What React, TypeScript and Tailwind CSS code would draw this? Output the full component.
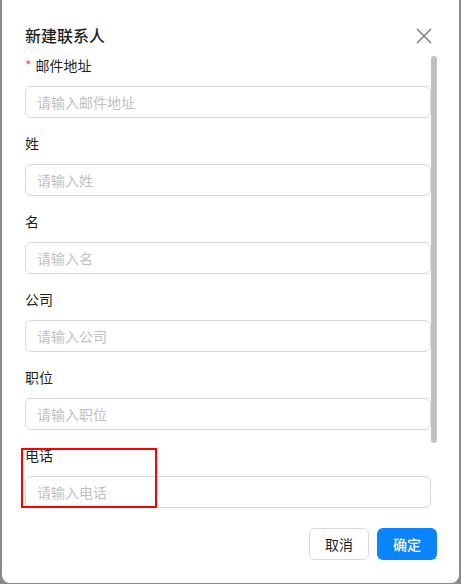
const fields = [
  { label: '邮件地址', required: true },
  { label: '姓' },
  { label: '名' },
  { label: '公司' },
  { label: '职位' },
  { label: '电话' },
];

export default function App() {
  return (
    <div
      className="relative h-[584px] w-[461px] overflow-hidden bg-[#8a8a8a] pt-px"
      style={{ fontFamily: '"Noto Sans CJK SC", "Noto Sans", sans-serif' }}
    >
      {/* dialog */}
      <div className="mx-[2px] -mt-[11px] h-[593px] rounded-lg bg-white pl-[23px] pr-[22px] pt-[34px]">
        <div className="flex h-6 items-center justify-between">
          <h2 className="pb-[3px] text-base font-medium leading-6 text-[#1f1f1f]">新建联系人</h2>
          <svg width="16" height="16" viewBox="0 0 16 16" className="mr-[5px]">
            <path d="M1 1L15 15M15 1L1 15" stroke="#737373" strokeWidth="1.3" fill="none" />
          </svg>
        </div>

        <div className="mt-2 flex h-[452px] overflow-hidden">
          <div className="w-[406px] shrink-0">
            {fields.map((f) => (
              <div key={f.label} className="mb-4">
                <div className="mb-2 flex h-[22px] items-center pb-[3px] text-sm leading-[19px] text-[#1f1f1f]">
                  {f.required && <span className="mr-1 text-[#ff4d4f]">*</span>}
                  {f.label}
                </div>
                <input
                  className="h-8 w-full rounded-md border border-[#d9d9d9] bg-white px-[11px] pb-px text-sm text-[#1f1f1f] outline-none placeholder:text-[#bfbfbf]"
                  placeholder={`请输入${f.label}`}
                />
              </div>
            ))}
          </div>
          {/* scrollbar */}
          <div className="w-[6px] shrink-0">
            <div className="h-[387px] rounded-full bg-[#c1c1c1]" />
          </div>
        </div>

        <div className="mt-5 flex justify-end gap-2">
          <button className="h-8 w-[60px] rounded-md border border-[#d9d9d9] bg-white text-sm text-[#1f1f1f]">
            取消
          </button>
          <button className="h-8 w-[60px] rounded-md bg-[#0a84ff] text-sm font-medium text-white">
            确定
          </button>
        </div>
      </div>

      {/* annotation box */}
      <div className="absolute left-[21px] top-[448px] h-[60px] w-[136px] border-2 border-[#ff0000]" />
    </div>
  );
}
